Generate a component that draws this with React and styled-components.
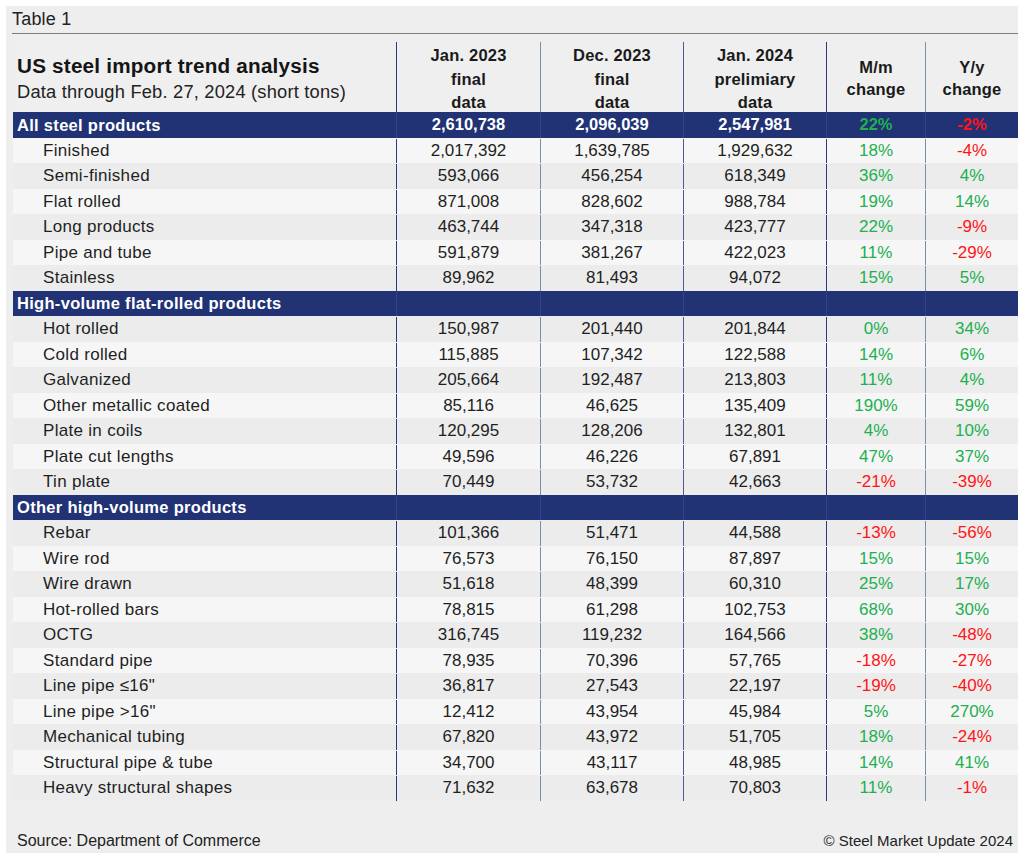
import React from "react";
import styled, { createGlobalStyle } from "styled-components";

const GlobalStyle = createGlobalStyle`
  html, body {
    margin: 0;
    padding: 0;
    background: #ffffff;
  }
  body {
    font-family: "Liberation Sans", Arial, Helvetica, sans-serif;
    color: #1f1f1f;
  }
`;

const COLS = "383px 144px 143px 143px 99px 93px";

const Panel = styled.div`
  margin: 6px 0 0 6px;
  width: 1012px;
  height: 847px;
  background: #eeeeee;
  display: flex;
  flex-direction: column;
`;

const Caption = styled.div`
  margin-left: 6px;
  height: 27px;
  display: flex;
  align-items: center;
  font-size: 18px;
  letter-spacing: 0.2px;
  color: #222;
  border-bottom: 1.5px solid #7c7c7c;
`;

const Table = styled.div`
  margin: 8px 0 0 7px;
  width: 1005px;
  display: flex;
  flex-direction: column;
`;

const HeadRow = styled.div`
  display: grid;
  grid-template-columns: ${COLS};
  height: 70px;
  background: #efefef;
`;

const TitleCell = styled.div`
  display: flex;
  flex-direction: column;
  justify-content: center;
  padding: 1px 0 0 4px;
`;

const Title = styled.div`
  font-size: 20.7px;
  font-weight: 700;
  letter-spacing: 0.2px;
  color: #151515;
  line-height: 25px;
`;

const Subtitle = styled.div`
  font-size: 18.3px;
  letter-spacing: 0.2px;
  color: #222;
  line-height: 27px;
`;

const HeadCell = styled.div`
  border-left: 1px solid ${(p) => p.$line};
  display: flex;
  flex-direction: column;
  align-items: center;
  justify-content: center;
  padding-top: ${(p) => (p.$tight ? "0" : "2px")};
  font-size: 16.5px;
  font-weight: 700;
  line-height: ${(p) => (p.$tight ? "22px" : "23.5px")};
  letter-spacing: 0.2px;
  color: #1a1a1a;
  text-align: center;
`;

const Row = styled.div`
  display: grid;
  grid-template-columns: ${COLS};
  height: 25.5px;
  padding-top: 1px;
  box-sizing: border-box;
  background: ${(p) => (p.$section ? "#213275" : p.$light ? "#f6f6f6" : "#ececec")};
  color: ${(p) => (p.$section ? "#ffffff" : "#1f1f1f")};
  font-weight: ${(p) => (p.$section ? 700 : 400)};
  font-size: ${(p) => (p.$section ? "16.5px" : "17px")};
`;

const Label = styled.div`
  display: flex;
  align-items: center;
  padding-left: ${(p) => (p.$section ? "4px" : "30px")};
  letter-spacing: 0.3px;
  white-space: nowrap;
`;

const Cell = styled.div`
  border-left: 1px solid ${(p) => (p.$section ? "#33438a" : p.$line)};
  margin-top: ${(p) => (p.$section ? "-1px" : "0")};
  display: flex;
  align-items: center;
  justify-content: center;
  color: ${(p) => p.$color || "inherit"};
`;

const Footer = styled.div`
  margin-top: auto;
  display: flex;
  justify-content: space-between;
  align-items: baseline;
  padding: 0 5px 3px 11px;
  color: #222;
`;

const FootText = styled.span`
  font-size: ${(p) => p.$size};
`;

const LINES = ["#2b3a78", "#7d8bb0", "#4a5a92", "#2b3a78", "#7d8bb0"];

const GREEN = "#20b050";
const RED = "#ff1414";

const heads = [
  ["Jan. 2023", "final", "data"],
  ["Dec. 2023", "final", "data"],
  ["Jan. 2024", "prelimiary", "data"],
  ["M/m", "change"],
  ["Y/y", "change"],
];

const rows = [
  { s: "All steel products", v: ["2,610,738", "2,096,039", "2,547,981", "22%", "-2%"] },
  { l: "Finished", v: ["2,017,392", "1,639,785", "1,929,632", "18%", "-4%"] },
  { l: "Semi-finished", v: ["593,066", "456,254", "618,349", "36%", "4%"] },
  { l: "Flat rolled", v: ["871,008", "828,602", "988,784", "19%", "14%"] },
  { l: "Long products", v: ["463,744", "347,318", "423,777", "22%", "-9%"] },
  { l: "Pipe and tube", v: ["591,879", "381,267", "422,023", "11%", "-29%"] },
  { l: "Stainless", v: ["89,962", "81,493", "94,072", "15%", "5%"] },
  { s: "High-volume flat-rolled products" },
  { l: "Hot rolled", v: ["150,987", "201,440", "201,844", "0%", "34%"] },
  { l: "Cold rolled", v: ["115,885", "107,342", "122,588", "14%", "6%"] },
  { l: "Galvanized", v: ["205,664", "192,487", "213,803", "11%", "4%"] },
  { l: "Other metallic coated", v: ["85,116", "46,625", "135,409", "190%", "59%"] },
  { l: "Plate in coils", v: ["120,295", "128,206", "132,801", "4%", "10%"] },
  { l: "Plate cut lengths", v: ["49,596", "46,226", "67,891", "47%", "37%"] },
  { l: "Tin plate", v: ["70,449", "53,732", "42,663", "-21%", "-39%"] },
  { s: "Other high-volume products" },
  { l: "Rebar", v: ["101,366", "51,471", "44,588", "-13%", "-56%"] },
  { l: "Wire rod", v: ["76,573", "76,150", "87,897", "15%", "15%"] },
  { l: "Wire drawn", v: ["51,618", "48,399", "60,310", "25%", "17%"] },
  { l: "Hot-rolled bars", v: ["78,815", "61,298", "102,753", "68%", "30%"] },
  { l: "OCTG", v: ["316,745", "119,232", "164,566", "38%", "-48%"] },
  { l: "Standard pipe", v: ["78,935", "70,396", "57,765", "-18%", "-27%"] },
  { l: "Line pipe \u226416\"", v: ["36,817", "27,543", "22,197", "-19%", "-40%"] },
  { l: "Line pipe >16\"", v: ["12,412", "43,954", "45,984", "5%", "270%"] },
  { l: "Mechanical tubing", v: ["67,820", "43,972", "51,705", "18%", "-24%"] },
  { l: "Structural pipe & tube", v: ["34,700", "43,117", "48,985", "14%", "41%"] },
  { l: "Heavy structural shapes", v: ["71,632", "63,678", "70,803", "11%", "-1%"] },
];

const pctColor = (i, val) => {
  if (i < 3 || !val) return null;
  return val.startsWith("-") ? RED : GREEN;
};

export default function App() {
  return (
    <>
      <GlobalStyle />
      <Panel>
        <Caption>Table 1</Caption>
        <Table>
          <HeadRow>
            <TitleCell>
              <Title>US steel import trend analysis</Title>
              <Subtitle>Data through Feb. 27, 2024 (short tons)</Subtitle>
            </TitleCell>
            {heads.map((h, i) => (
              <HeadCell key={i} $line={LINES[i]} $tight={h.length === 2}>
                {h.map((t) => (
                  <span key={t}>{t}</span>
                ))}
              </HeadCell>
            ))}
          </HeadRow>
          {rows.map((r, idx) => {
            const vals = r.v || ["", "", "", "", ""];
            return (
              <Row key={idx} $section={!!r.s} $light={idx % 2 === 1}>
                <Label $section={!!r.s}>{r.s || r.l}</Label>
                {vals.map((v, i) => (
                  <Cell key={i} $line={LINES[i]} $section={!!r.s} $color={pctColor(i, v)}>
                    {v}
                  </Cell>
                ))}
              </Row>
            );
          })}
        </Table>
        <Footer>
          <FootText $size="16px">Source: Department of Commerce</FootText>
          <FootText $size="15px">© Steel Market Update 2024</FootText>
        </Footer>
      </Panel>
    </>
  );
}
